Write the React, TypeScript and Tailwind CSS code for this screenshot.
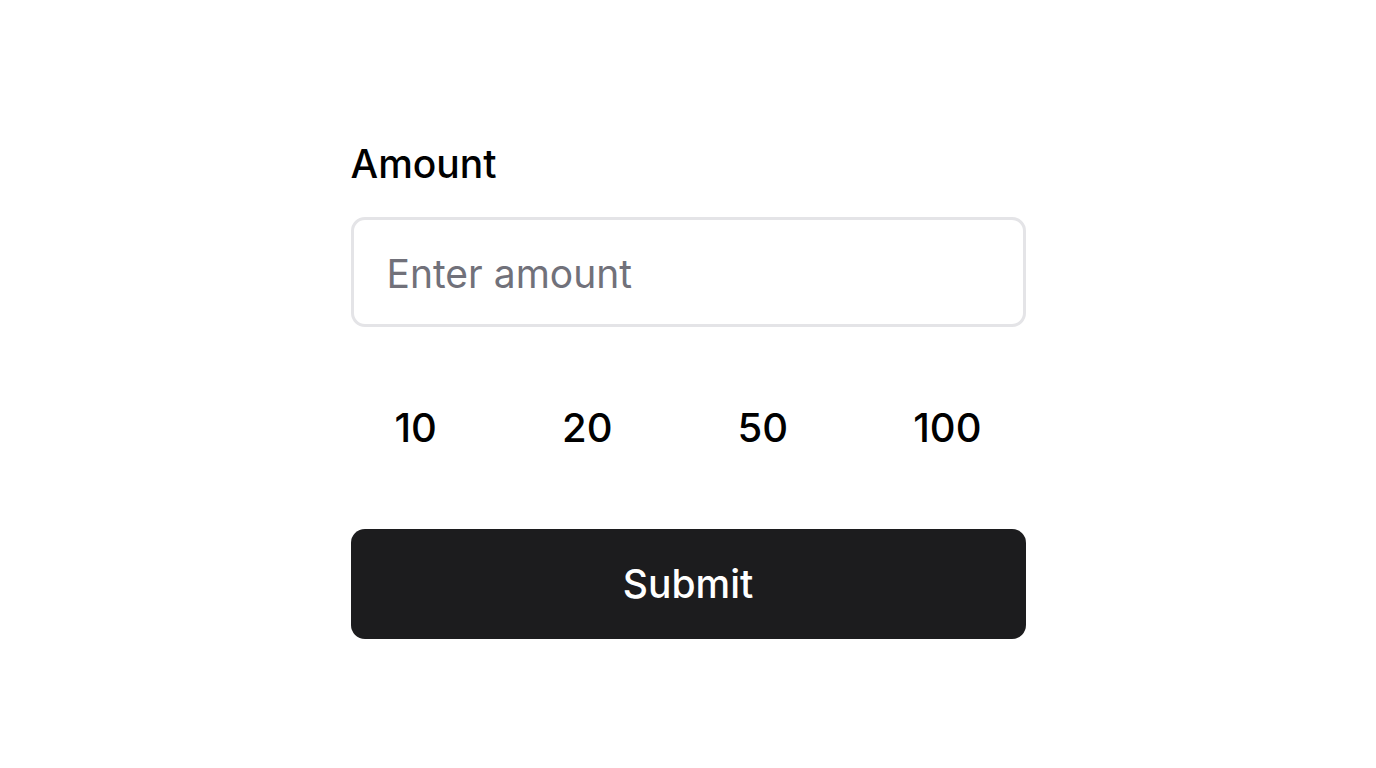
import { useState } from "react";

export default function App() {
	const [amount, setAmount] = useState("");
	const presets = [10, 20, 50, 100];

	return (
		<div className="min-h-screen bg-white font-['Inter',sans-serif] text-black">
			<div className="w-[675px] mx-auto pt-[141px]">
				<label
					htmlFor="amount"
					className="block text-[39px] leading-[46px] font-medium"
				>
					Amount
				</label>

				<input
					id="amount"
					type="text"
					value={amount}
					onChange={(e) => setAmount(e.target.value)}
					placeholder="Enter amount"
					className="mt-[30px] block w-full h-[110px] pl-[33px] pr-[34px] pt-[3px] rounded-[14px] border-[3px] border-[#e4e4e7] text-[39px] text-black placeholder:text-[#71717a] outline-none"
				/>

				<div className="mt-[51px] flex justify-between">
					{presets.map((p) => (
						<button
							key={p}
							type="button"
							onClick={() => setAmount(String(p))}
							className="h-[100px] px-[44px] text-[40px] leading-[48px] font-medium"
						>
							{p}
						</button>
					))}
				</div>

				<button
					type="submit"
					className="mt-[51px] w-full h-[110px] rounded-[14px] bg-[#1c1c1e] text-white text-[39px] font-medium"
				>
					Submit
				</button>
			</div>
		</div>
	);
}
